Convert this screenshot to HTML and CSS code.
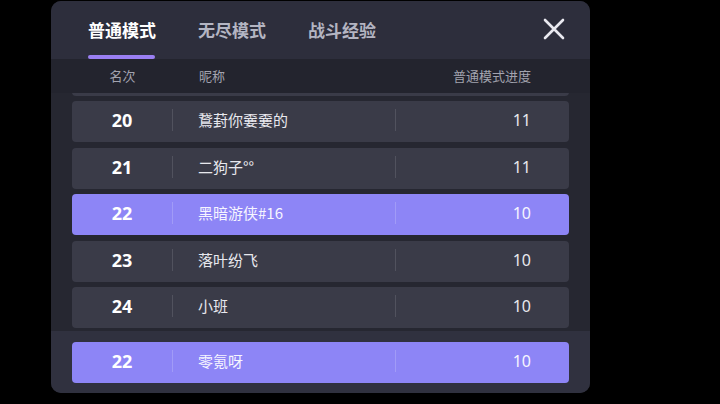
FILE: index.html
```html
<!DOCTYPE html>
<html lang="zh">
<head>
<meta charset="utf-8">
<link rel="stylesheet" href="styles.css">
</head>
<body>
<div class="panel">
  <div class="header">
    <div class="tab active">普通模式</div>
    <div class="tab">无尽模式</div>
    <div class="tab">战斗经验</div>
    <div class="close">
      <svg width="22" height="22" viewBox="0 0 22 22"><path d="M2 2 L20 20 M20 2 L2 20" stroke="#e9e9f0" stroke-width="2.6" stroke-linecap="round"/></svg>
    </div>
  </div>
  <div class="cols">
    <div class="c-rank">名次</div>
    <div class="c-name">昵称</div>
    <div class="c-val">普通模式进度</div>
  </div>
  <div class="list">
    <div class="rows">
      <div class="row"></div>
      <div class="row"><div class="rank">20</div><div class="name">鵞葑你嫑嫑的</div><div class="val">11</div></div>
      <div class="row"><div class="rank">21</div><div class="name">二狗子°°</div><div class="val">11</div></div>
      <div class="row me"><div class="rank">22</div><div class="name">黑暗游侠#16</div><div class="val">10</div></div>
      <div class="row"><div class="rank">23</div><div class="name">落叶纷飞</div><div class="val">10</div></div>
      <div class="row"><div class="rank">24</div><div class="name">小班</div><div class="val">10</div></div>
    </div>
  </div>
  <div class="footer">
    <div class="row me"><div class="rank">22</div><div class="name">零氪呀</div><div class="val">10</div></div>
  </div>
</div>
</body>
</html>
```
FILE: styles.css
```css
* { box-sizing: border-box; }
html, body { margin: 0; padding: 0; }
body {
  background: #000;
  width: 720px;
  height: 404px;
  overflow: hidden;
  font-family: "Noto Sans", "Noto Sans CJK SC", sans-serif;
}
.panel {
  margin: 1px 0 0 51px;
  width: 539px;
  height: 392px;
  border-radius: 10px;
  overflow: hidden;
  display: flex;
  flex-direction: column;
  background: #262731;
}
.header {
  height: 58px;
  flex: none;
  background: #2d2e3c;
  display: flex;
  align-items: center;
  padding: 0 25px 0 37px;
  gap: 43px;
}
.tab {
  font-family: "Noto Sans CJK SC", sans-serif;
  font-size: 17px;
  font-weight: 700;
  color: #b4b5c2;
  width: 67px;
  height: 58px;
  line-height: 58px;
  text-align: center;
  position: relative;
  white-space: nowrap;
}
.tab.active { color: #ffffff; }
.tab.active::after {
  content: "";
  position: absolute;
  left: 0;
  right: 0;
  bottom: 0;
  height: 4px;
  border-radius: 2px;
  background: #9a7ff3;
}
.close {
  margin-left: auto;
  width: 22px;
  height: 22px;
  display: flex;
  margin-top: -2px;
}
.cols {
  height: 34px;
  flex: none;
  background: #23242e;
  display: flex;
  align-items: center;
  padding: 0 21px 2px;
  font-family: "Noto Sans CJK SC", sans-serif;
  font-size: 13px;
  color: #a2a3af;
}
.c-rank { width: 101px; text-align: center; }
.c-name { flex: 1; padding-left: 26px; }
.c-val { padding-right: 38px; }
.list {
  height: 238px;
  flex: none;
  overflow: hidden;
  padding: 0 21px;
  background: #262731;
}
.rows {
  margin-top: -38.5px;
  display: flex;
  flex-direction: column;
  gap: 5.5px;
}
.row {
  height: 41px;
  flex: none;
  border-radius: 4px;
  background: #3a3b48;
  display: flex;
  align-items: center;
  padding-bottom: 3px;
  color: #e8e8ee;
}
.row.me { background: #8d85f6; color: #f6f5ff; }
.rank {
  width: 101px;
  text-align: center;
  font-size: 18px;
  font-weight: 700;
  color: #ffffff;
  border-right: 1px solid rgba(255,255,255,0.12);
  line-height: 22px;
}
.row.me .rank { border-right-color: rgba(255,255,255,0.18); }
.name {
  width: 223px;
  padding-left: 25px;
  font-family: "Noto Sans CJK SC", sans-serif;
  font-size: 15px;
  border-right: 1px solid rgba(255,255,255,0.12);
  line-height: 22px;
  white-space: nowrap;
}
.row.me .name { border-right-color: rgba(255,255,255,0.18); }
.val {
  flex: 1;
  text-align: right;
  padding-right: 38px;
  font-size: 16px;
}
.footer {
  flex: 1;
  background: #30313f;
  padding: 11px 21px 0;
}
```
